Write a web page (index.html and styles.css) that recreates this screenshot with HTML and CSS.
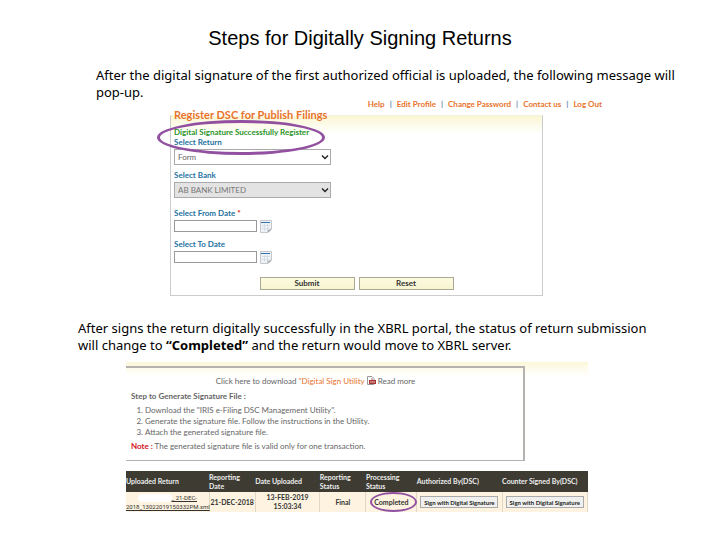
FILE: index.html
```html
<!DOCTYPE html>
<html lang="en">
<head>
    <meta charset="UTF-8">
    <meta name="viewport" content="width=device-width, initial-scale=1.0">
    <title>Steps for Digitally Signing Returns</title>
    <link rel="stylesheet" href="styles.css">
</head>
<body>

<h1>Steps for Digitally Signing Returns</h1>

<p class="text text-first">After the digital signature of the first authorized official is uploaded, the following message will pop-up.</p>

<!-- Register form -->
<div class="portal">
    <nav class="menu">
        <a href="#">Help</a><span>|</span>
        <a href="#">Edit Profile</a><span>|</span>
        <a href="#">Change Password</a><span>|</span>
        <a href="#">Contact us</a><span>|</span>
        <a href="#">Log Out</a>
    </nav>

    <form class="register">
        <fieldset>
            <legend>Register DSC for Publish Filings</legend>
            <p class="success">Digital Signature Successfully Register</p>
            <div class="field">
                <label for="return">Select Return</label>
                <div class="select-box">
                    <select id="return"><option>Form</option></select>
                    <svg class="arrow" viewBox="0 0 8 6"><path d="M1 1.5 L4 4.5 L7 1.5"/></svg>
                </div>
            </div>
            <div class="field">
                <label for="bank">Select Bank</label>
                <div class="select-box">
                    <select id="bank" disabled><option>AB BANK LIMITED</option></select>
                    <svg class="arrow" viewBox="0 0 8 6"><path d="M1 1.5 L4 4.5 L7 1.5"/></svg>
                </div>
            </div>
            <div class="field date">
                <label for="from">Select From Date <b>*</b></label>
                <div class="date-row">
                    <input type="text" id="from">
                    <svg class="calendar" viewBox="0 0 12 13"><path class="page" d="M.5 .5 H11.5 V9 L8 12.5 H.5 Z"/><path class="top" d="M1 2.5 H10"/><path class="grid" d="M2 5.5 H10 M2 8.5 H9 M4.5 4 V11 M7.5 4 V10"/><path class="fold" d="M11.5 8 Q10 10 7 10 Q8.5 11 7 12.5 Q11 12 11.5 8 Z"/></svg>
                </div>
            </div>
            <div class="field date">
                <label for="to">Select To Date</label>
                <div class="date-row">
                    <input type="text" id="to">
                    <svg class="calendar" viewBox="0 0 12 13"><path class="page" d="M.5 .5 H11.5 V9 L8 12.5 H.5 Z"/><path class="top" d="M1 2.5 H10"/><path class="grid" d="M2 5.5 H10 M2 8.5 H9 M4.5 4 V11 M7.5 4 V10"/><path class="fold" d="M11.5 8 Q10 10 7 10 Q8.5 11 7 12.5 Q11 12 11.5 8 Z"/></svg>
                </div>
            </div>
            <div class="actions">
                <button type="button">Submit</button>
                <button type="button">Reset</button>
            </div>
        </fieldset>
        <div class="circle circle-success"></div>
    </form>
</div>

<p class="text text-second">After signs the return digitally successfully in the XBRL portal, the status of return submission will change to <b>“Completed”</b> and the return would move to XBRL server.</p>

<!-- Signature steps and submitted returns -->
<div class="status">
    <div class="steps">
        <div class="download">
            <span>Click here to download <a href="#">"Digital Sign Utility</a></span>
            <svg class="pdf" viewBox="0 0 9 9"><path class="sheet" d="M.5 .5 H5 L7 2.5 V8.5 H.5 Z"/><path class="tag" d="M2 4 H9 V8 H2 Z M4 3 L5 2 L6 4 Z"/><path class="mark" d="M3 6 H8"/></svg>
            <span>Read more</span>
        </div>
        <h2>Step to Generate Signature File :</h2>
        <ol>
            <li>Download the "IRIS e-Filing DSC Management Utility".</li>
            <li>Generate the signature file. Follow the instructions in the Utility.</li>
            <li>Attach the generated signature file.</li>
        </ol>
        <p class="note"><b>Note :</b> The generated signature file is valid only for one transaction.</p>
    </div>

    <table>
        <colgroup>
            <col class="col-file"><col class="col-date"><col class="col-uploaded"><col class="col-rep"><col class="col-proc"><col class="col-sign"><col class="col-sign">
        </colgroup>
        <thead>
            <tr>
                <th>Uploaded Return</th>
                <th>Reporting<br>Date</th>
                <th>Date Uploaded</th>
                <th>Reporting<br>Status</th>
                <th>Processing<br>Status</th>
                <th>Authorized By(DSC)</th>
                <th>Counter Signed By(DSC)</th>
            </tr>
        </thead>
        <tbody>
            <tr>
                <td class="file"><span class="hidden-name"></span><a href="#">_ 21-DEC-<br>2018_13022019150332PM.xml</a></td>
                <td>21-DEC-2018</td>
                <td>13-FEB-2019<br>15:03:34</td>
                <td>Final</td>
                <td class="completed">Completed<div class="circle circle-completed"></div></td>
                <td><button type="button">Sign with Digital Signature</button></td>
                <td><button type="button">Sign with Digital Signature</button></td>
            </tr>
        </tbody>
    </table>
</div>

</body>
</html>
```
FILE: styles.css
```css
* {
    box-sizing: border-box;
}

body {
    margin: 0;
    padding: 25px 0 28px;
    background-color: #fff;
    color: #000;
    font-family: Lato, sans-serif;
    font-size: 8px;
}

h1, h2, p, ol {
    margin: 0;
}

h1 {
    font-family: "Liberation Sans", Arial, sans-serif;
    font-size: 20px;
    font-weight: normal;
    line-height: 26px;
    text-align: center;
}

a {
    color: #e8732c;
    text-decoration: none;
}

/* Slide text */
.text {
    font-family: "Noto Sans", sans-serif;
    font-size: 13px;
    line-height: 17px;
}

.text-first {
    margin: 16px 32px 0 96px;
}

.text-second {
    margin: 24px 56px 0 78px;
}

/* Register form */
.portal {
    margin: -2px 118px 0 170px;
}

.menu {
    display: flex;
    justify-content: flex-end;
    gap: 5px;
    line-height: 10px;
    font-weight: bold;
}

.menu span {
    color: #6c86a8;
}

.register {
    position: relative;
    margin-right: 59px;
}

fieldset {
    margin: 0;
    padding: 7px 3px 5px;
    border: 1px solid #ccc;
    border-top-color: #f5f3dc;
    background: linear-gradient(#faf6d4, #fff 18px);
}

legend {
    padding: 0;
    color: #e8732c;
    font-size: 11px;
    font-weight: bold;
    line-height: 12px;
}

.success {
    color: #2a9428;
    font-weight: bold;
    line-height: 9px;
}

.field {
    margin-bottom: 5px;
}

.date {
    padding-top: 5px;
    margin-bottom: 1px;
}

label {
    display: block;
    margin-bottom: 2px;
    color: #24719f;
    font-weight: bold;
    line-height: 10px;
}

label b {
    color: #d22;
}

.select-box {
    position: relative;
    width: 157px;
}

select {
    display: block;
    width: 100%;
    height: 16px;
    padding: 0 3px;
    border: 1px solid #aaa;
    border-radius: 0;
    appearance: none;
    background-color: #fff;
    color: #666;
    font-family: Lato, sans-serif;
    font-size: 8px;
}

select:disabled {
    background-color: #e3e3e3;
    color: #777;
    opacity: 1;
}

.arrow {
    position: absolute;
    top: 5px;
    right: 2px;
    width: 8px;
    height: 6px;
    fill: none;
    stroke: #222;
    stroke-width: 1.4;
}

.date-row {
    display: flex;
    gap: 3px;
}

input {
    width: 83px;
    height: 12px;
    padding: 0 2px;
    border: 1px solid #999;
    font-size: 8px;
}

.calendar {
    width: 12px;
    height: 13px;
}

.calendar .page {
    fill: #eef2f5;
    stroke: #c4c8cc;
}

.calendar .top {
    stroke: #3574ae;
}

.calendar .grid {
    stroke: #c6ced8;
    stroke-width: .5;
}

.calendar .fold {
    fill: #aeb1b5;
}

.actions {
    display: flex;
    justify-content: center;
    gap: 4px;
    margin-top: 13px;
}

.actions button {
    width: 95px;
    height: 13px;
    padding: 0;
    border: 1px solid #a9a994;
    background: linear-gradient(#fcfbe0, #f6f4d0);
    color: #333;
    font-family: Lato, sans-serif;
    font-size: 8px;
    font-weight: bold;
    line-height: 11px;
}

/* Purple marks over the content */
.circle {
    position: absolute;
    border: 2px solid #9150a0;
    border-radius: 50%;
}

.circle-success {
    top: 11px;
    left: -13px;
    width: 168px;
    height: 35px;
    border-width: 3px;
}

/* Signature steps */
.status {
    margin: 8px 132px 0 126px;
    padding-top: 4px;
    background: linear-gradient(#fbf7d8, #fff 14px);
    color: #666;
}

.steps {
    margin-right: 63px;
    padding: 8px 5px 9px;
    border: solid #b5b2b0;
    border-width: 2px 2px 1px 0;
}

.download {
    display: flex;
    justify-content: center;
    gap: 2px;
    padding-right: 18px;
    line-height: 10px;
}

.pdf {
    width: 9px;
    height: 9px;
}

.pdf .sheet {
    fill: #fff;
    stroke: #999;
}

.pdf .tag {
    fill: #a93232;
}

.pdf .mark {
    stroke: #e8c4c4;
}

h2 {
    margin-top: 5px;
    font-size: 8px;
    line-height: 10px;
}

ol {
    margin: 4px 0 3px;
    padding-left: 14px;
    line-height: 11px;
}

.note {
    line-height: 10px;
}

.note b {
    color: #d4141c;
}

/* Submitted returns */
table {
    width: 100%;
    margin-top: 10px;
    border-collapse: collapse;
    table-layout: fixed;
    color: #333;
    font-size: 7px;
    line-height: 9px;
}

th {
    height: 21px;
    padding: 0;
    background-color: #3d3b32;
    color: #eee;
    text-align: left;
}

td {
    position: relative;
    height: 20px;
    padding: 0;
    border-right: 1px solid #e0d8c4;
    background-color: #fdf3e0;
    text-align: center;
    font-weight: bold;
}

td a {
    color: #333;
    text-decoration: underline;
}

.file {
    font-family: Roboto, sans-serif;
    font-size: 6px;
    font-weight: normal;
}

.hidden-name {
    display: inline-block;
    width: 34px;
    height: 8px;
    border-radius: 4px;
    background-color: #fff;
    vertical-align: middle;
}

td button {
    width: 78px;
    height: 12px;
    padding: 0;
    border: 1px solid #aaa;
    background-color: #f0f0ee;
    color: #222;
    font-family: Lato, sans-serif;
    font-size: 6px;
    font-weight: bold;
    white-space: nowrap;
}

.col-file {
    width: 18%;
}

.col-date {
    width: 10%;
}

.col-uploaded {
    width: 14%;
}

.col-rep {
    width: 10%;
}

.col-proc {
    width: 11%;
}

.circle-completed {
    top: 0;
    left: 4px;
    width: 47px;
    height: 20px;
}
```
